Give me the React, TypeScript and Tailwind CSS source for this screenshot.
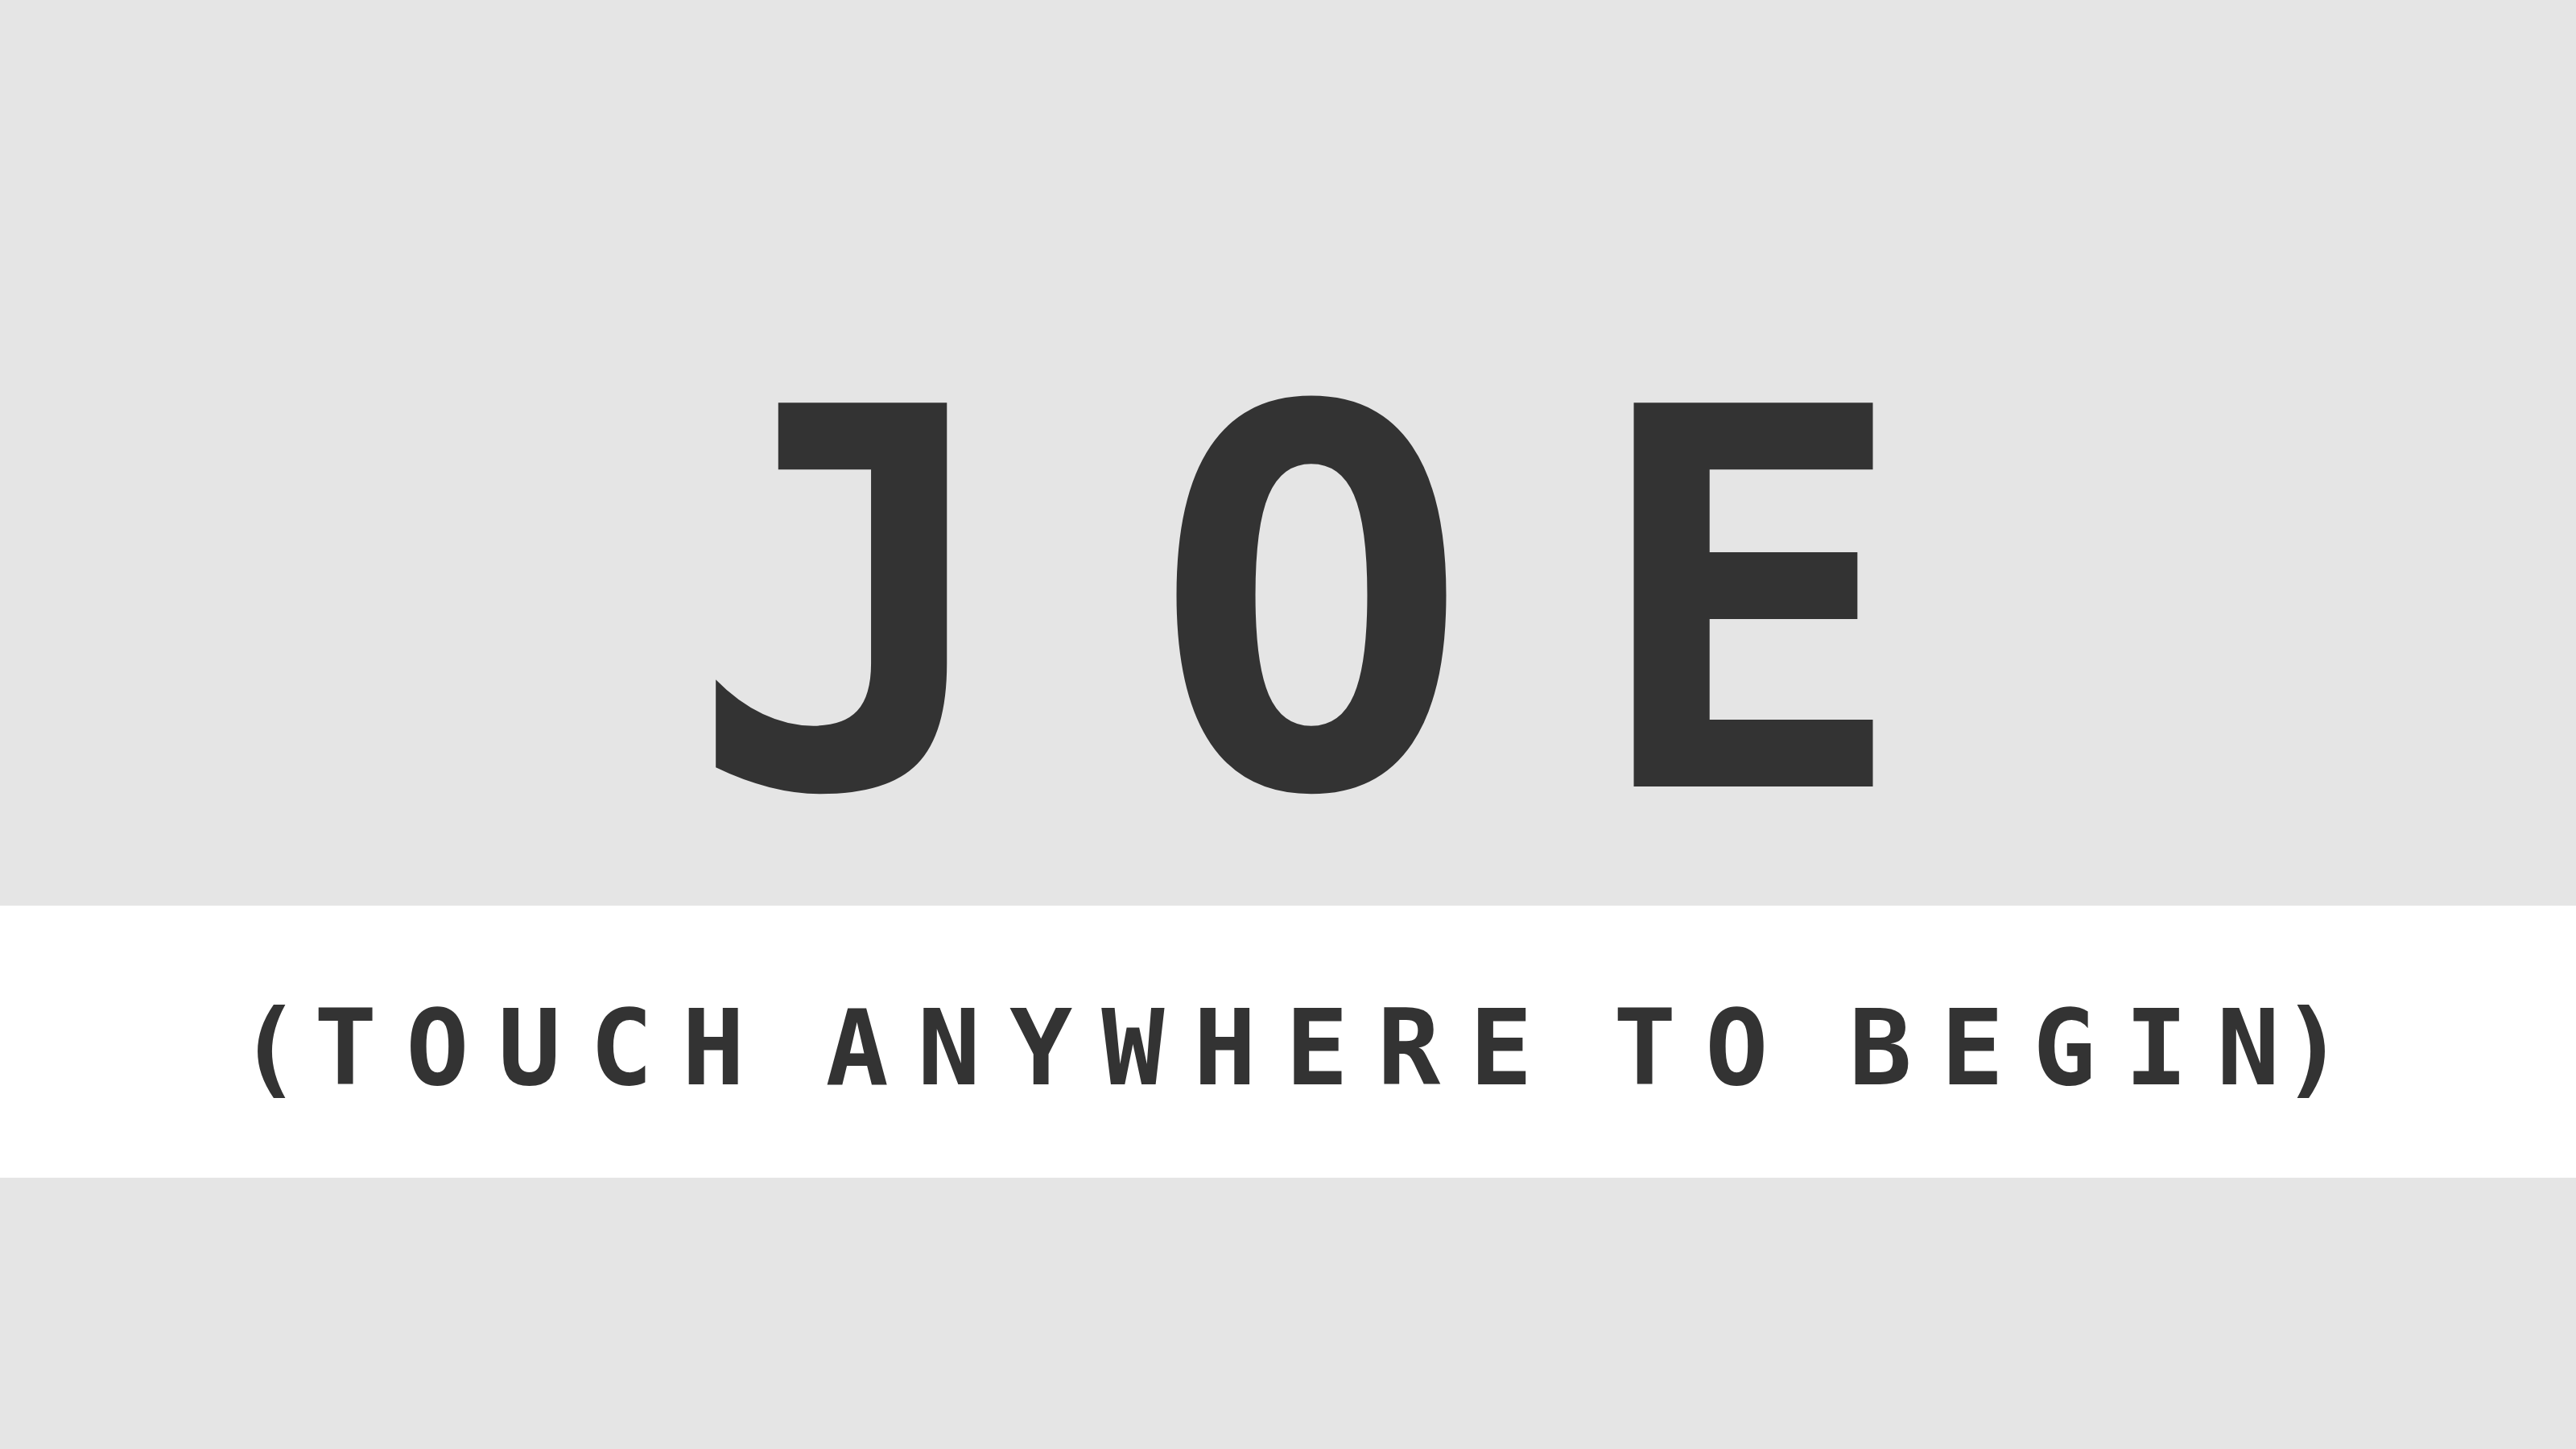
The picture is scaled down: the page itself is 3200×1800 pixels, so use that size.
import React from 'react';

// Title screen: big name on grey, tap hint on a white band
export default function App() {
  return (
    <div className="w-full h-[1800px] bg-[#e5e5e5] flex flex-col text-[#333333] font-['DejaVu_Sans_Mono',monospace] font-bold">
      <div className="h-[1125px] flex justify-center pt-[424px]">
        <h1 className="text-[654px] leading-none pl-[200px] uppercase whitespace-pre">
          <span className="tracking-[184px]">J</span>
          <span className="tracking-[150px]">O</span>
          <span className="tracking-[176px]">E</span>
        </h1>
      </div>

      <div className="h-[338px] bg-white flex justify-center pt-[112px]">
        <p className="text-[130px] leading-none tracking-[36px] pl-[44px] [word-spacing:-50px] whitespace-pre uppercase">
          <span className="tracking-[16px]">(</span>TOUCH ANYWHERE TO BEGI<span className="tracking-[2px]">N</span>)
        </p>
      </div>

      <div className="flex-1" />
    </div>
  );
}
